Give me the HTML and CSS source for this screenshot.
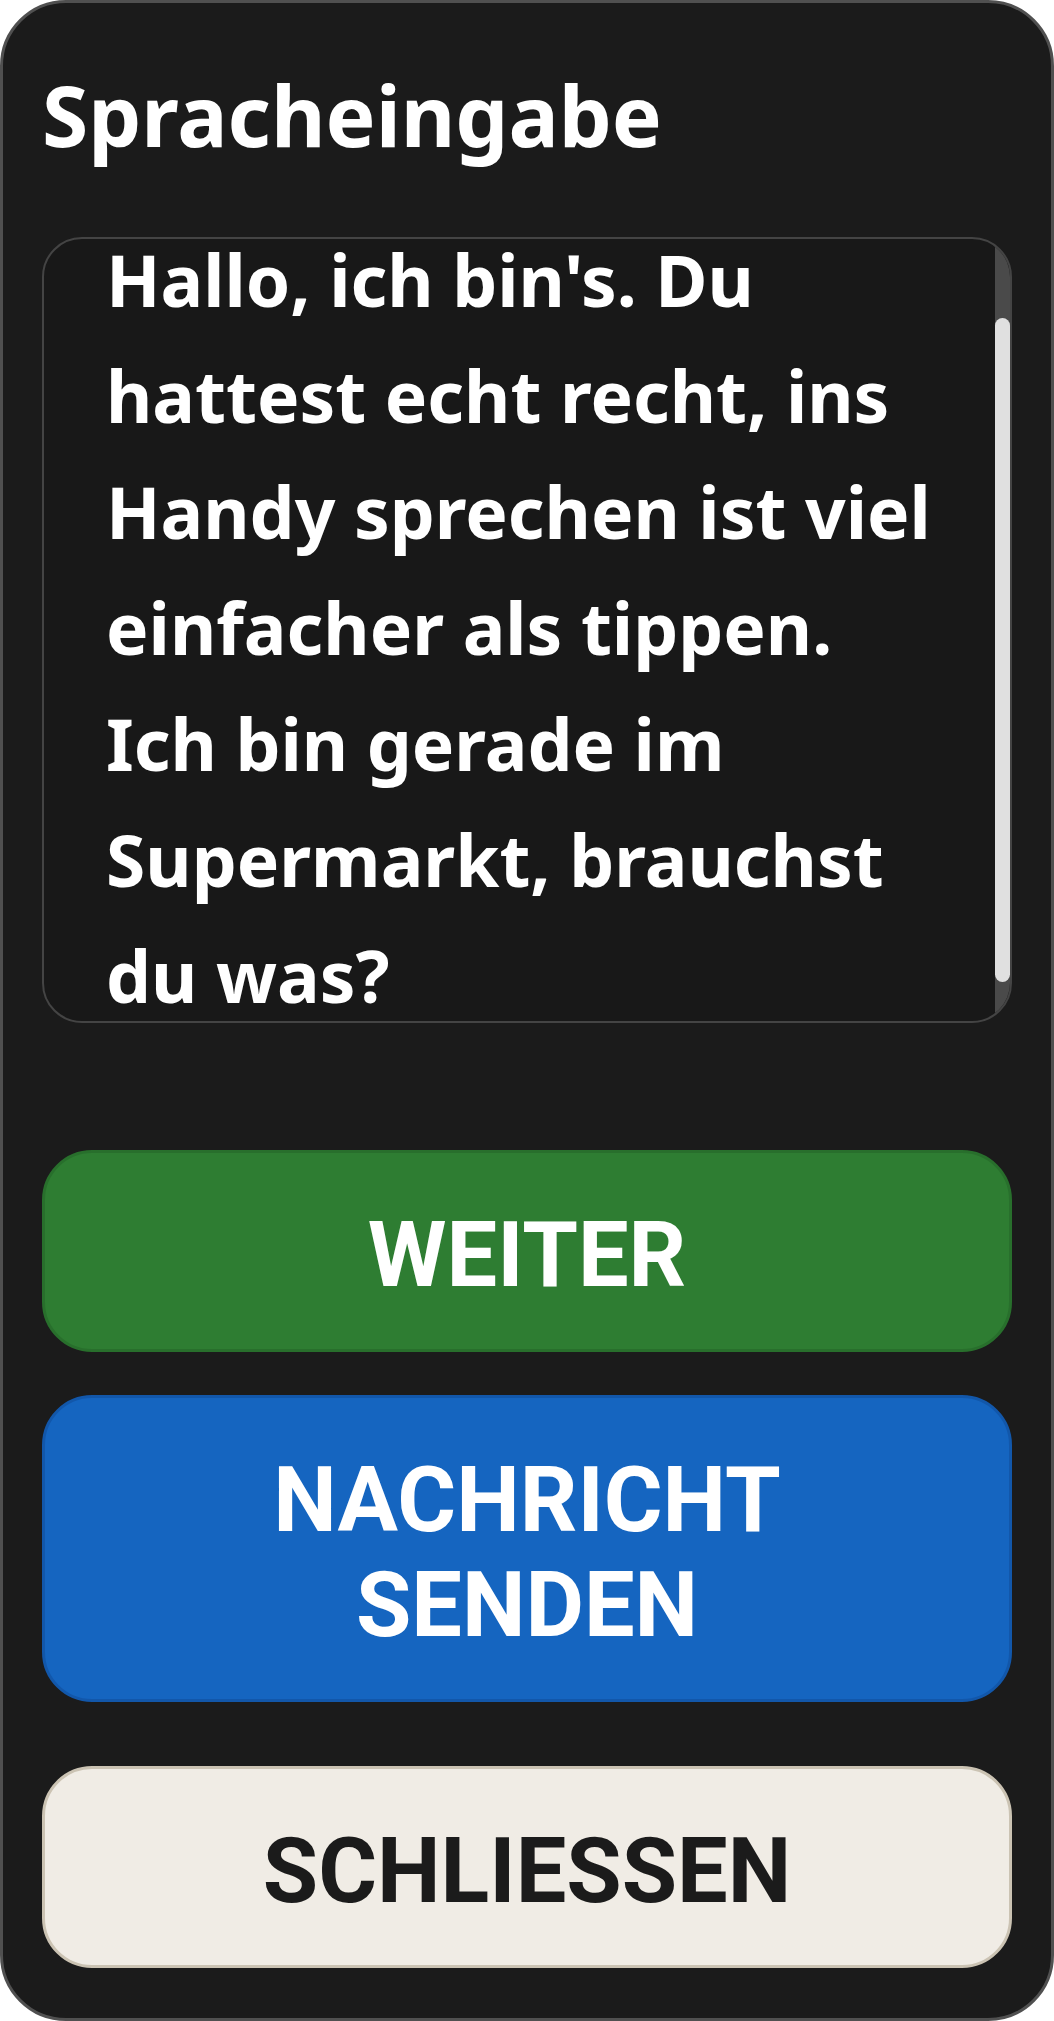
FILE: index.html
```html
<!DOCTYPE html>
<html lang="de">
<head>
<meta charset="utf-8">
<title>Spracheingabe</title>
<link rel="stylesheet" href="styles.css">
</head>
<body>
<div class="dialog">
  <h1 class="dialog-title">Spracheingabe</h1>
  <div class="transcript">
    <div class="transcript-viewport" id="transcript">
      <p class="transcript-text">Hallo, ich bin's. Du hattest echt recht, ins Handy sprechen ist viel einfacher als tippen. Ich bin gerade im Supermarkt, brauchst du was?</p>
    </div>
    <div class="scrollbar">
      <div class="scrollbar-thumb" style="margin-top: 79px; height: 664px;"></div>
    </div>
  </div>
  <div class="actions">
    <button class="btn btn-next" type="button">WEITER</button>
    <button class="btn btn-send" type="button">NACHRICHT SENDEN</button>
    <button class="btn btn-close" type="button">SCHLIESSEN</button>
  </div>
</div>
<script src="script.js"></script>
</body>
</html>
```
FILE: styles.css
```css
html, body {
  margin: 0;
  padding: 0;
  background: #ffffff;
}

.dialog {
  box-sizing: border-box;
  width: 1054px;
  height: 2021px;
  background: #1b1b1b;
  border: 3px solid #505050;
  border-radius: 66px;
  padding: 54px 39px 0;
  display: flex;
  flex-direction: column;
}

.dialog-title {
  margin: 0 0 65px;
  font-family: "Noto Sans", sans-serif;
  font-weight: 700;
  font-size: 84px;
  line-height: normal;
  color: #ffffff;
}

.transcript {
  box-sizing: border-box;
  height: 786px;
  flex: none;
  display: flex;
  border: 2px solid #444444;
  border-radius: 40px;
  background: #181818;
  overflow: hidden;
}

.transcript-viewport {
  flex: 1;
  min-width: 0;
  overflow: hidden;
}

.transcript-text {
  margin: 0;
  padding: 76px 50px 33px 62px;
  font-family: "Noto Sans", sans-serif;
  font-weight: 700;
  font-size: 71.3px;
  line-height: 116px;
  color: #ffffff;
}

.scrollbar {
  flex: none;
  width: 15px;
  background: #4a4a4a;
}

.scrollbar-thumb {
  width: 100%;
  background: #e0e0e0;
  border-radius: 8px;
}

.actions {
  display: flex;
  flex-direction: column;
  margin-top: 127px;
}

.btn {
  box-sizing: border-box;
  width: 100%;
  border: 3px solid;
  border-radius: 50px;
  padding: 50px 60px 41px;
  font-family: Roboto, "Liberation Sans", sans-serif;
  font-weight: 700;
  font-size: 90px;
  line-height: 105px;
  text-align: center;
  cursor: pointer;
}

.btn-next {
  background: #2e7d32;
  border-color: #286f2c;
  color: #ffffff;
}

.btn-send {
  margin-top: 43px;
  background: #1565c0;
  border-color: #1257aa;
  color: #ffffff;
}

.btn-close {
  margin-top: 64px;
  background: #f0ece5;
  border-color: #cbc3b3;
  color: #1b1b1b;
}
```
FILE: script.js
```js
document.getElementById('transcript').scrollTop = 93;
```
